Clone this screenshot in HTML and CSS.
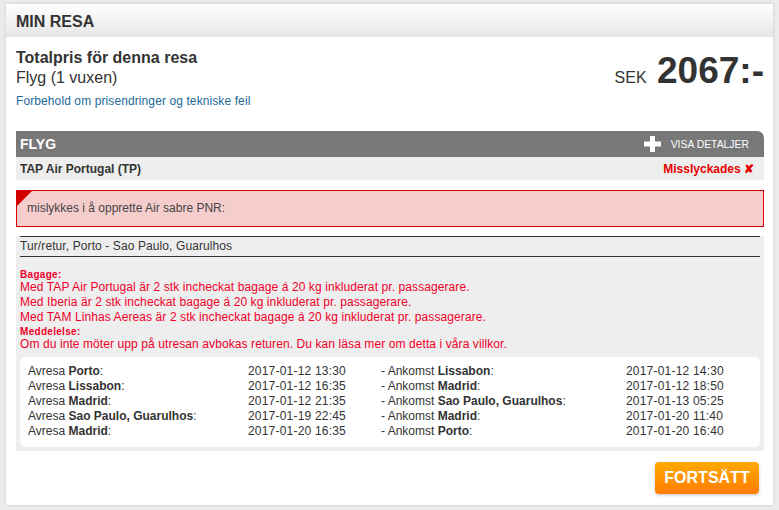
FILE: index.html
```html
<!DOCTYPE html>
<html lang="sv">
<head>
    <meta charset="UTF-8">
    <title>Min resa</title>
    <link rel="stylesheet" href="styles.css">
</head>
<body>
    <div class="panel">
        <div class="panel-head">MIN RESA</div>

        <div class="panel-body">
            <div class="summary">
                <div class="summary-text">
                    <div class="summary-title">Totalpris för denna resa</div>
                    <div class="summary-sub">Flyg (1 vuxen)</div>
                    <div class="summary-note">Forbehold om prisendringer og tekniske feil</div>
                </div>
                <div class="price">
                    <span class="price-cur">SEK</span>
                    <span class="price-sum">2067:-</span>
                </div>
            </div>

            <div class="section-bar">
                <span class="section-title">FLYG</span>
                <span class="details-link">
                    <svg class="plus" width="17" height="16" viewBox="0 0 17 16">
                        <rect x="6" y="0" width="5" height="16" fill="#fff"/>
                        <rect x="0" y="5.5" width="17" height="5" fill="#fff"/>
                    </svg>
                    VISA DETALJER
                </span>
            </div>
            <div class="carrier-row">
                <span class="carrier">TAP Air Portugal (TP)</span>
                <span class="failed">Misslyckades &#10008;</span>
            </div>

            <div class="error-box">mislykkes i å opprette Air sabre PNR:</div>

            <div class="trip">
                <div class="route">Tur/retur, Porto - Sao Paulo, Guarulhos</div>

                <div class="info">
                    <div class="info-label">Bagage:</div>
                    <div>Med TAP Air Portugal är 2 stk incheckat bagage á 20 kg inkluderat pr. passagerare.</div>
                    <div>Med Iberia är 2 stk incheckat bagage á 20 kg inkluderat pr. passagerare.</div>
                    <div>Med TAM Linhas Aereas är 2 stk incheckat bagage á 20 kg inkluderat pr. passagerare.</div>
                    <div class="info-label">Meddelelse:</div>
                    <div>Om du inte möter upp på utresan avbokas returen. Du kan läsa mer om detta i våra villkor.</div>
                </div>

                <div class="legs">
                    <div>Avresa <b>Porto</b>:</div>
                    <div class="time">2017-01-12 13:30</div>
                    <div>- Ankomst <b>Lissabon</b>:</div>
                    <div class="time">2017-01-12 14:30</div>

                    <div>Avresa <b>Lissabon</b>:</div>
                    <div class="time">2017-01-12 16:35</div>
                    <div>- Ankomst <b>Madrid</b>:</div>
                    <div class="time">2017-01-12 18:50</div>

                    <div>Avresa <b>Madrid</b>:</div>
                    <div class="time">2017-01-12 21:35</div>
                    <div>- Ankomst <b>Sao Paulo, Guarulhos</b>:</div>
                    <div class="time">2017-01-13 05:25</div>

                    <div>Avresa <b>Sao Paulo, Guarulhos</b>:</div>
                    <div class="time">2017-01-19 22:45</div>
                    <div>- Ankomst <b>Madrid</b>:</div>
                    <div class="time">2017-01-20 11:40</div>

                    <div>Avresa <b>Madrid</b>:</div>
                    <div class="time">2017-01-20 16:35</div>
                    <div>- Ankomst <b>Porto</b>:</div>
                    <div class="time">2017-01-20 16:40</div>
                </div>
            </div>

            <div class="actions">
                <button class="btn-continue">FORTSÄTT</button>
            </div>
        </div>
    </div>
</body>
</html>
```

FILE: styles.css
```css
body {
    margin: 0;
    padding: 4px 6px 5px 6px;
    background: #ebebeb;
    font-family: "Liberation Sans", Arial, sans-serif;
    color: #333;
}
.panel {
    background: #fff;
    box-shadow: 0 0 3px rgba(0, 0, 0, 0.15);
}
.panel-head {
    height: 33px;
    line-height: 35px;
    padding-left: 10px;
    font-size: 16px;
    font-weight: bold;
    color: #333;
    background: linear-gradient(to bottom, #fff, #e6e6e6);
}
.panel-body {
    padding: 0 9px 11px 10px;
}
.summary {
    display: flex;
    justify-content: space-between;
    align-items: flex-start;
    height: 94px;
}
.summary-title {
    margin-top: 11px;
    font-size: 16px;
    font-weight: bold;
    line-height: 20px;
}
.summary-sub {
    font-size: 16px;
    line-height: 20px;
}
.summary-note {
    margin-top: 6px;
    font-size: 12px;
    letter-spacing: 0.1px;
    color: #236a97;
}
.price {
    margin-top: 13px;
    white-space: nowrap;
}
.price-cur {
    font-size: 16px;
    margin-right: 6px;
}
.price-sum {
    font-size: 37px;
    font-weight: bold;
}
.section-bar {
    display: flex;
    justify-content: space-between;
    align-items: center;
    height: 26px;
    padding: 0 15px 0 4px;
    background: #787878;
    color: #fff;
    border-top-right-radius: 7px;
}
.section-title {
    font-size: 14px;
    font-weight: bold;
}
.details-link {
    display: flex;
    align-items: center;
    font-size: 10.4px;
}
.plus {
    margin-right: 10px;
}
.carrier-row {
    display: flex;
    justify-content: space-between;
    align-items: center;
    height: 23px;
    padding: 0 10px 0 4px;
    background: #eee;
    font-size: 12px;
    font-weight: bold;
}
.failed {
    color: #e80000;
}
.error-box {
    position: relative;
    margin-top: 10px;
    height: 35px;
    line-height: 35px;
    padding-left: 10px;
    border: 1px solid #d40000;
    background: #f5cdcd;
    font-size: 12px;
    color: #444;
}
.error-box::before {
    content: "";
    position: absolute;
    top: 0;
    left: 0;
    border-top: 15px solid #d40000;
    border-right: 15px solid transparent;
}
.trip {
    margin-top: 9px;
    padding: 0 4px 4px 4px;
    background: #eee;
}
.route {
    height: 19px;
    line-height: 19px;
    border-top: 1px solid #333;
    border-bottom: 1px solid #333;
    font-size: 12px;
    letter-spacing: 0.1px;
}
.info {
    padding: 11px 0 5px 0;
    font-size: 12px;
    line-height: 15px;
    letter-spacing: 0.09px;
    color: #f00029;
}
.info-label {
    font-size: 10px;
    font-weight: bold;
    line-height: 13px;
    letter-spacing: 0.3px;
}
.info-label + div {
    margin-top: -1px;
}
.legs {
    display: grid;
    grid-template-columns: 220px 133px 245px auto;
    padding: 7px 8px 8px 8px;
    background: #fff;
    border-radius: 6px;
    font-size: 12px;
    line-height: 15px;
    color: #333;
}
.time {
    letter-spacing: 0.2px;
}
.actions {
    display: flex;
    justify-content: flex-end;
    padding-top: 11px;
}
.btn-continue {
    width: 104px;
    height: 32px;
    border: none;
    border-radius: 4px;
    background: linear-gradient(to bottom, #ffaa00, #ff7c00);
    box-shadow: 0 1px 3px rgba(0, 0, 0, 0.25);
    color: #fff;
    font-family: "Liberation Sans", Arial, sans-serif;
    font-size: 16px;
    font-weight: bold;
    margin-right: 5px;
}
```
